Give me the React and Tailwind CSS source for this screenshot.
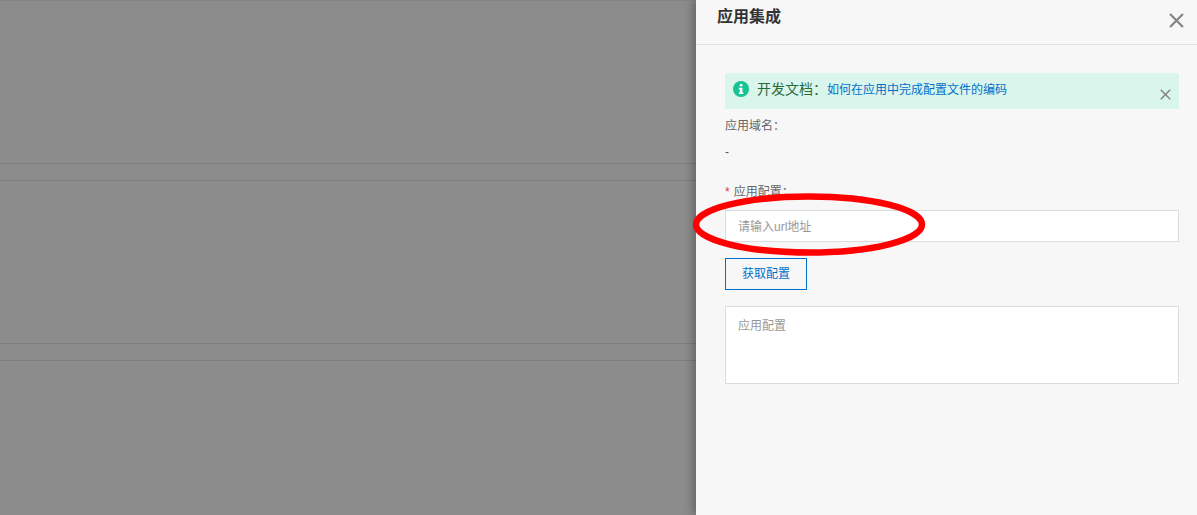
import React from "react";

function Cross({ size, width, className }) {
  return (
    <svg width={size} height={size} viewBox="0 0 14 14" className={className} fill="none">
      <path d="M1 1L13 13M13 1L1 13" stroke="#858585" strokeWidth={width} />
    </svg>
  );
}

export default function App() {
  return (
    <div className="relative flex h-[515px] w-[1197px] overflow-hidden bg-[#8c8c8c] font-['Liberation_Sans','Noto_Sans_CJK_SC',sans-serif] text-[12px]">
      <div className="w-[696px] shrink-0 flex flex-col">
        <div className="h-[164px] border-t border-b border-t-[#858585] border-b-[#7e7e7e]" />
        <div className="h-[17px] border-b border-[#7e7e7e]" />
        <div className="h-[163px] border-b border-[#7e7e7e]" />
        <div className="h-[17px] border-b border-[#7e7e7e]" />
      </div>

      <div className="flex w-[501px] shrink-0 flex-col bg-[#f7f7f7] shadow-[-4px_0_8px_rgba(0,0,0,0.25)]">
        <header className="flex h-[45px] shrink-0 items-start justify-between border-b border-[#e2e2e2] pl-[21px] pr-[13px]">
          <h2 className="mt-[5px] text-[16px] leading-[24px] font-bold text-[#333333]">应用集成</h2>
          <Cross size={15} width={2.1} className="mt-[13px]" />
        </header>

        <div className="flex flex-col pl-[29px] pr-[18px] pt-[28px]">
          <div className="flex h-[36px] items-start bg-[#daf5eb] pl-[8px] pr-[8px]">
            <svg width="16" height="16" viewBox="0 0 16 16" className="mt-[8px] shrink-0">
              <circle cx="8" cy="8" r="8" fill="#17c295" />
              <rect x="6.8" y="3" width="2.6" height="2.4" fill="#ffffff" />
              <path d="M5.8 6.8H9.4V11.4H10.4V13H5.8V11.4H6.8V8.4H5.8Z" fill="#ffffff" />
            </svg>
            <span className="ml-[8px] mt-[7px] text-[14px] leading-[18px] text-[#2b6b3a]">开发文档：</span>
            <span className="mt-[8px] text-[12px] leading-[18px] text-[#0070cc]">如何在应用中完成配置文件的编码</span>
            <Cross size={11} width={1.9} className="ml-auto mt-[16px]" />
          </div>

          <label className="mt-[8px] leading-[18px] text-[#666666]">应用域名：</label>
          <p className="mt-[8px] leading-[18px] text-[#555555]">-</p>

          <label className="mt-[22px] leading-[18px] text-[#666666]">
            <span className="mr-[4px] text-[#e0364c]">*</span>应用配置：
          </label>
          <input
            readOnly
            placeholder="请输入url地址"
            className="mt-[9px] h-[32px] w-full border border-[#dcdcdc] bg-white px-[12px] pt-[1px] text-[12px] outline-none placeholder:text-[#999999]"
          />
          <button className="mt-[16px] h-[32px] w-[82px] border border-[#0070cc] text-[12px] text-[#0070cc]">获取配置</button>
          <textarea
            readOnly
            placeholder="应用配置"
            className="mt-[16px] h-[78px] w-full resize-none border border-[#dcdcdc] bg-white px-[12px] pt-[10px] pb-[8px] text-[12px] leading-[18px] outline-none placeholder:text-[#999999]"
          />
        </div>
      </div>

      <svg className="absolute left-[690px] top-[188px]" width="240" height="72" viewBox="0 0 240 72" fill="none">
        <ellipse cx="119" cy="36.5" rx="113" ry="28" stroke="#ff0000" strokeWidth="6.5" />
      </svg>
    </div>
  );
}
